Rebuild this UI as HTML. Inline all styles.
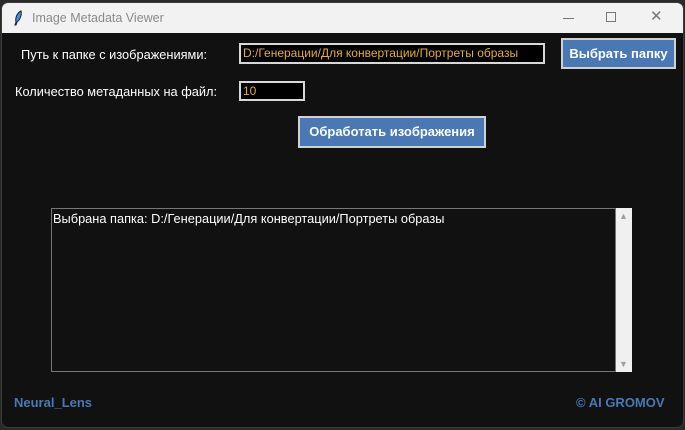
<!DOCTYPE html>
<html><head><meta charset="utf-8"><style>
*{margin:0;padding:0;box-sizing:border-box}
body{width:685px;height:430px;background:#2a2a2a;font-family:"Liberation Sans",sans-serif;overflow:hidden;position:relative}
.win{position:absolute;left:1px;top:2px;width:683px;height:426px;background:#111;border:1px solid #3a3a3a;border-radius:7px;overflow:hidden}
.tb{position:absolute;left:0;top:0;width:100%;height:30px;background:#f2f2f2}
.tt{position:absolute;left:30px;top:8px;font-size:12.5px;color:#8a8a8a}
.a{position:absolute;white-space:nowrap}
.lbl{color:#fff;font-size:12.8px}
.ent{background:#000;border:2px solid #d8d8d8;color:#e0b030;font-size:12px;padding:1px 2px}
.btn{background:#4a78b4;border:2px solid #d0d0d0;color:#fff;font-weight:bold;font-size:13px;text-align:center}
</style></head><body>
<div class="win">
<div class="tb">
<svg class="a" style="left:11px;top:7px" width="10" height="16" viewBox="0 0 10 16"><path d="M8 1 C4 3 2 8 3 12 L2 15 L3 15 L4 12 C7 10 9 5 8 1Z" fill="#4a8ce0" stroke="#123" stroke-width="1"/></svg>
<div class="tt">Image Metadata Viewer</div>
<div class="a" style="left:561px;top:15px;width:11px;height:1px;background:#777"></div>
<div class="a" style="left:604px;top:9px;width:10px;height:10px;border:1px solid #777"></div>
<div class="a" style="left:648px;top:4px;font-size:15px;color:#777">✕</div>
</div>
<div class="a lbl" style="left:19px;top:44px">Путь к папке с изображениями:</div>
<div class="a ent" style="left:237px;top:40px;width:306px;height:21px">D:/Генерации/Для конвертации/Портреты образы</div>
<div class="a btn" style="left:559px;top:35px;width:115px;height:31px;line-height:27px">Выбрать папку</div>
<div class="a lbl" style="left:13px;top:81px">Количество метаданных на файл:</div>
<div class="a ent" style="left:237px;top:78px;width:66px;height:20px">10</div>
<div class="a btn" style="left:296px;top:113px;width:188px;height:32px;line-height:28px">Обработать изображения</div>
<div class="a" style="left:49px;top:205px;width:565px;height:164px;border:1px solid #777;background:#111"></div>
<div class="a lbl" style="left:51px;top:208px">Выбрана папка: D:/Генерации/Для конвертации/Портреты образы</div>
<div class="a" style="left:614px;top:205px;width:16px;height:164px;background:#f0f0f0"></div>
<div class="a" style="left:617px;top:208px;font-size:9px;color:#a0a0a0">▲</div>
<div class="a" style="left:617px;top:356px;font-size:9px;color:#a0a0a0">▼</div>
<div class="a" style="left:12px;top:392px;color:#4a78b4;font-weight:bold;font-size:13px">Neural_Lens</div>
<div class="a" style="left:574px;top:392px;color:#4a78b4;font-weight:bold;font-size:13px">© AI GROMOV</div>
</div>
</body></html>
